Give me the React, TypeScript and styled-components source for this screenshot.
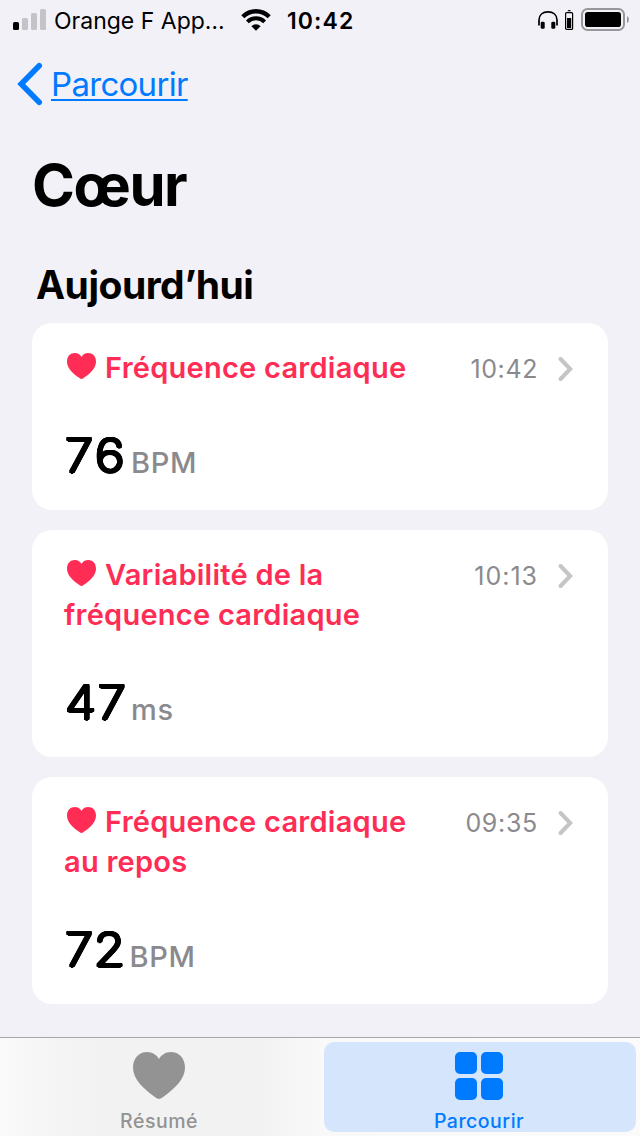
import React from "react";
import styled, { createGlobalStyle } from "styled-components";

const GlobalStyle = createGlobalStyle`
  * { box-sizing: border-box; }
  body {
    margin: 0;
    background: #f2f1f7;
    font-family: Inter, "Liberation Sans", sans-serif;
    color: #000;
  }
`;

const Screen = styled.div`
  width: 640px;
  height: 1136px;
  display: flex;
  flex-direction: column;
  overflow: hidden;
  background: #f2f1f7;
`;

const StatusBar = styled.header`
  height: 40px;
  flex: none;
  display: flex;
  align-items: center;
  padding: 0 11px 0 13px;
`;

const Carrier = styled.span`
  margin-left: 8px;
  width: 187px;
  font-size: 23px;
  line-height: 38px;
  padding-top: 2px;
  white-space: nowrap;
`;

const Clock = styled.span`
  margin-left: 16px;
  padding-top: 2px;
  font-size: 23px;
  font-weight: 600;
  line-height: 38px;
  letter-spacing: 1.1px;
`;

const StatusIcons = styled.div`
  margin-left: auto;
  display: flex;
  align-items: center;
  gap: 7px;
`;

const NavBar = styled.nav`
  height: 88px;
  flex: none;
  display: flex;
  align-items: center;
  padding-left: 16px;
`;

const BackLink = styled.a`
  margin-left: 7px;
  font-size: 33px;
  line-height: 44px;
  letter-spacing: -0.7px;
  color: #007aff;
  text-decoration: underline;
  text-decoration-thickness: 2px;
  text-underline-offset: 3px;
  text-decoration-skip-ink: none;
`;

const Title = styled.h1`
  margin: 22px 0 0 32px;
  font-size: 58px;
  font-weight: 700;
  line-height: 70px;
  letter-spacing: -1.4px;
`;

const SectionTitle = styled.h2`
  margin: 41px 0 14px 36px;
  font-size: 39px;
  font-weight: 700;
  line-height: 48px;
  letter-spacing: -0.5px;
`;

const CardList = styled.main`
  flex: 1;
  display: flex;
  flex-direction: column;
  gap: 20px;
  padding: 0 32px;
`;

const Card = styled.article`
  padding: 25px 34px 25px 32px;
  border-radius: 20px;
  background: #fff;
`;

const CardHeader = styled.div`
  display: flex;
  align-items: flex-start;
`;

const Metric = styled.h3`
  flex: 1;
  margin: 0;
  font-size: 29px;
  font-weight: 600;
  line-height: 40px;
  letter-spacing: 0.25px;
  color: #ff2d55;

  svg {
    margin: 0 9px 0 3px;
    vertical-align: -1px;
  }
`;

const Time = styled.time<{ $spacing: number }>`
  padding-top: 2px;
  font-size: 25px;
  line-height: 38px;
  letter-spacing: ${(p) => p.$spacing}px;
  color: #8a8a8e;
`;

const Disclosure = styled.span`
  display: flex;
  margin: 8px 0 0 20px;
`;

const Reading = styled.div`
  display: flex;
  align-items: flex-start;
  height: 60px;
  margin-top: 37px;
`;

/* Thin digits thickened evenly in every direction give round stroke ends. */
const ROUND = 1.5;
const roundShadow = Array.from({ length: 16 }, (_, i) => {
  const a = (i / 16) * Math.PI * 2;
  return `${(Math.cos(a) * ROUND).toFixed(2)}px ${(Math.sin(a) * ROUND).toFixed(2)}px 0 #000`;
}).join(", ");

const Value = styled.span<{ $width: number; $spacing: number }>`
  width: ${(p) => p.$width}px;
  padding-left: 1px;
  font-size: 46.5px;
  font-weight: 200;
  line-height: 60px;
  letter-spacing: ${(p) => p.$spacing}px;
  text-shadow: ${roundShadow};
  transform: scaleX(1.09);
  transform-origin: left;
`;

const Unit = styled.span`
  font-size: 29px;
  font-weight: 500;
  line-height: 75px;
  letter-spacing: 0.7px;
  color: #8a8a8e;
`;

const TabBar = styled.footer`
  height: 99px;
  flex: none;
  display: grid;
  grid-template-columns: 1fr 1fr;
  border-top: 1px solid #a6a6aa;
  background: linear-gradient(90deg, #fafafa 0, #f4f4f4 60px, #f2f2f2 110px, #f2f2f2 260px, #f9f9f9 322px, #fbfbfb 100%);
`;

const Tab = styled.div<{ $active?: boolean }>`
  margin: 4px;
  border-radius: 10px;
  display: flex;
  flex-direction: column;
  align-items: center;
  padding: 10px 2px 0 0;
  color: ${(p) => (p.$active ? "#007aff" : "#939393")};
  background: ${(p) => (p.$active ? "#d5e6fc" : "transparent")};
`;

const TabIcon = styled.span`
  height: 58px;
  display: flex;
  align-items: flex-start;
`;

const TabLabel = styled.span`
  font-size: 19.5px;
  font-weight: 500;
  line-height: 22px;
  letter-spacing: 0.5px;
`;

const Heart = ({ width, height }: { width: number; height: number }) => (
  <svg width={width} height={height} viewBox="0 0 51.4 46.7" preserveAspectRatio="none" fill="currentColor">
    <path d="M25.7 46.7C24.6 46.7 23.5 46.1 22 45C10 36.5 0 27 0 15.5C0 6 6 0 14 0C19 0 23.3 2.7 25.7 7C28 2.7 32.4 0 37.4 0C45.4 0 51.4 6 51.4 15.5C51.4 27 41.4 36.5 29.4 45C27.9 46.1 26.8 46.7 25.7 46.7Z" />
  </svg>
);

const Signal = () => (
  <svg width="33" height="22" viewBox="0 0 33 22">
    <rect x="0" y="13" width="6" height="8" rx="1.5" />
    <g fill="#c4c3c8">
      <rect x="9" y="9" width="6" height="12" rx="1.5" />
      <rect x="18" y="4" width="6" height="17" rx="1.5" />
      <rect x="27" y="0" width="6" height="21" rx="1.5" />
    </g>
  </svg>
);

const Wifi = () => (
  <svg width="30" height="22" viewBox="0 0 30 22" fill="none" stroke="#000">
    <path d="M1.8 7.8A18.6 18.6 0 0 1 28.2 7.8" strokeWidth="4.4" />
    <path d="M6.4 12.9A12.1 12.1 0 0 1 23.6 12.9" strokeWidth="4" />
    <path d="M15 21.8L10.4 17.2A6.6 6.6 0 0 1 19.6 17.2Z" fill="#000" stroke="none" />
  </svg>
);

const Headphones = () => (
  <svg width="20" height="18" viewBox="0 0 20 18">
    <path d="M1 14.5V9C1 4 4.7 0.9 10 0.9S19 4 19 9V14.5" fill="none" stroke="#000" strokeWidth="1.7" />
    <rect x="2.7" y="10.7" width="4" height="7" rx="1.3" />
    <rect x="13.3" y="10.7" width="4" height="7" rx="1.3" />
  </svg>
);

const DeviceBattery = () => (
  <svg width="9" height="20" viewBox="0 0 9 20">
    <path d="M2.5 1.2Q2.7 0 4.2 0T5.9 1.2Z" />
    <rect x="0.6" y="2.6" width="7" height="16.8" rx="1" fill="none" stroke="#000" strokeWidth="1.2" />
    <rect x="2" y="8" width="4.2" height="10" />
  </svg>
);

const Battery = () => (
  <svg width="48" height="24" viewBox="0 0 48 24">
    <rect x="1" y="1" width="42" height="21" rx="5.5" fill="none" stroke="#98979c" strokeWidth="2" />
    <rect x="4" y="4" width="36" height="15" rx="2.8" />
    <path d="M46 8Q48 9 48 11.5T46 15Z" fill="#98979c" />
  </svg>
);

const BackChevron = () => (
  <svg width="28" height="44" viewBox="0 0 28 44" fill="none" stroke="#007aff" strokeWidth="5.6" strokeLinecap="round">
    <path d="M23.2 3.8L5.2 22L23.2 40.2" />
  </svg>
);

const Chevron = () => (
  <svg width="16" height="26" viewBox="0 0 16 26" fill="none" stroke="#c5c5c8" strokeWidth="4" strokeLinecap="round">
    <path d="M2.6 3L12.2 13L2.6 23" />
  </svg>
);

const Grid = () => (
  <svg width="48" height="48" viewBox="0 0 48 48" fill="currentColor">
    <rect width="22" height="22" rx="5" />
    <rect x="26" width="22" height="22" rx="5" />
    <rect y="26" width="22" height="22" rx="5" />
    <rect x="26" y="26" width="22" height="22" rx="5" />
  </svg>
);

const readings = [
  { name: ["Fréquence cardiaque"], time: "10:42", spacing: 0.6, value: "76", width: 67, digitSpacing: 2.4, unit: "BPM" },
  { name: ["Variabilité de la", "fréquence cardiaque"], time: "10:13", spacing: 1, value: "47", width: 67, digitSpacing: 1.6, unit: "ms" },
  { name: ["Fréquence cardiaque", "au repos"], time: "09:35", spacing: 0.7, value: "72", width: 65.5, digitSpacing: 0.6, unit: "BPM" },
];

export default function App() {
  return (
    <Screen>
      <GlobalStyle />
      <StatusBar>
        <Signal />
        <Carrier>Orange F App…</Carrier>
        <Wifi />
        <Clock>10:42</Clock>
        <StatusIcons>
          <Headphones />
          <DeviceBattery />
          <Battery />
        </StatusIcons>
      </StatusBar>
      <NavBar>
        <BackChevron />
        <BackLink>Parcourir</BackLink>
      </NavBar>
      <Title>Cœur</Title>
      <SectionTitle>Aujourd’hui</SectionTitle>
      <CardList>
        {readings.map((r) => (
          <Card key={r.time}>
            <CardHeader>
              <Metric>
                <Heart width={29} height={26} />
                {r.name[0]}
                {r.name[1] && (
                  <>
                    <br />
                    {r.name[1]}
                  </>
                )}
              </Metric>
              <Time $spacing={r.spacing}>{r.time}</Time>
              <Disclosure>
                <Chevron />
              </Disclosure>
            </CardHeader>
            <Reading>
              <Value $width={r.width} $spacing={r.digitSpacing}>
                {r.value}
              </Value>
              <Unit>{r.unit}</Unit>
            </Reading>
          </Card>
        ))}
      </CardList>
      <TabBar>
        <Tab>
          <TabIcon>
            <Heart width={52} height={47} />
          </TabIcon>
          <TabLabel>Résumé</TabLabel>
        </Tab>
        <Tab $active>
          <TabIcon>
            <Grid />
          </TabIcon>
          <TabLabel>Parcourir</TabLabel>
        </Tab>
      </TabBar>
    </Screen>
  );
}
